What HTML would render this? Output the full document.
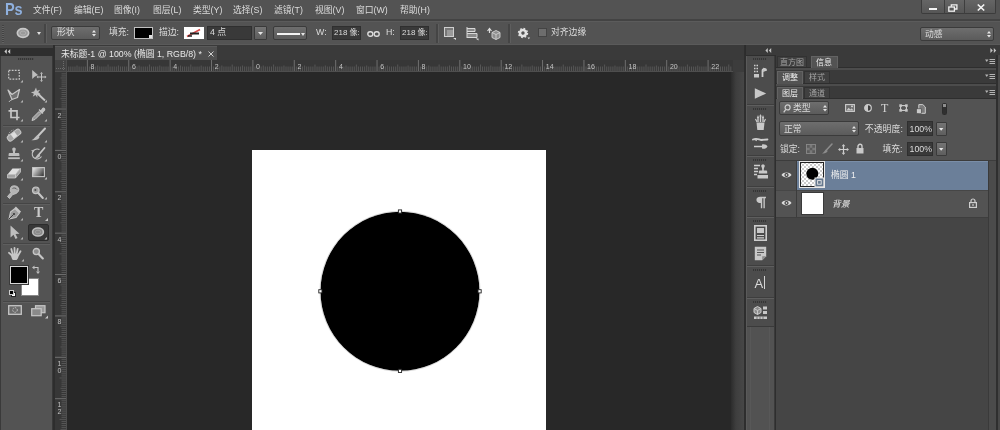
<!DOCTYPE html>
<html lang="zh-CN">
<head>
<meta charset="utf-8">
<title>Photoshop</title>
<style>
html,body{margin:0;padding:0;}
body{width:1000px;height:430px;overflow:hidden;background:#535353;position:relative;
 font-family:"Liberation Sans","Noto Sans CJK SC",sans-serif;font-size:9px;color:#dedede;line-height:1;}
#app{position:absolute;left:0;top:0;width:1000px;height:430px;will-change:transform;}
.a{position:absolute;box-sizing:border-box;}
.t{position:absolute;white-space:nowrap;}
svg{position:absolute;overflow:visible;}
.menu{font-size:8.8px;color:#dcdcdc;}
.lbl{font-size:8.8px;color:#dcdcdc;}
.dd{background:linear-gradient(#6e6e6e,#5b5b5b);border:1px solid #3b3b3b;border-radius:2px;}
.inp{background:#393939;border:1px solid #2f2f2f;}
.btn{background:linear-gradient(#747474,#5e5e5e);border:1px solid #3a3a3a;border-radius:1px;}
.vsep{width:2px;background:#454545;border-right:1px solid #5e5e5e;}
.hsep{height:2px;background:#454545;border-bottom:1px solid #5e5e5e;}
.rn{position:absolute;font-size:7px;color:#c2c2c2;line-height:1;}
.ptab{position:absolute;font-size:8px;white-space:nowrap;text-align:center;box-sizing:border-box;}
.on{background:#535353;color:#ececec;}
.off{color:#a2a2a2;}
</style>
</head>
<body>
<div id="app">
<!-- TOP BARS -->
<div class="a " style="left:0px;top:0px;width:1000px;height:19px;background:#535353;"></div>
<div class="a " style="left:0px;top:19px;width:1000px;height:2px;background:#434343;"></div>
<div class="a " style="left:0px;top:21px;width:1000px;height:1px;background:#5b5b5b;"></div>
<div class="t " style="left:4.5px;top:1px;font-size:16.5px;font-weight:bold;color:#8fb0de;letter-spacing:-0.3px;transform:scaleX(0.88);transform-origin:0 0;">Ps</div>
<div class="t menu" style="left:33px;top:6px;">文件(F)</div>
<div class="t menu" style="left:74px;top:6px;">编辑(E)</div>
<div class="t menu" style="left:114px;top:6px;">图像(I)</div>
<div class="t menu" style="left:153px;top:6px;">图层(L)</div>
<div class="t menu" style="left:193px;top:6px;">类型(Y)</div>
<div class="t menu" style="left:233px;top:6px;">选择(S)</div>
<div class="t menu" style="left:274px;top:6px;">滤镜(T)</div>
<div class="t menu" style="left:315px;top:6px;">视图(V)</div>
<div class="t menu" style="left:356px;top:6px;">窗口(W)</div>
<div class="t menu" style="left:400px;top:6px;">帮助(H)</div>
<div class="a " style="left:921px;top:0px;width:75px;height:14px;background:linear-gradient(#656565,#565656);border:1px solid #3c3c3c;border-top:none;border-radius:0 0 2px 2px;"></div>
<div class="a " style="left:943.5px;top:0px;width:1px;height:13.5px;background:#3e3e3e;"></div>
<div class="a " style="left:963.5px;top:0px;width:1px;height:13.5px;background:#3e3e3e;"></div>
<div class="a " style="left:929px;top:8px;width:8px;height:2px;background:#f2f2f2;"></div>
<svg style="left:948px;top:3.5px;" width="10" height="8" viewBox="0 0 10 8"><path d="M3.3 2.8V0.8h5.600v4.200H6.800" fill="none" stroke="#f0f0f0" stroke-width="1.300"/><rect x="0.800" y="3" width="5.600" height="4.200" fill="none" stroke="#f0f0f0" stroke-width="1.300"/></svg>
<svg style="left:976.5px;top:3.5px;" width="8" height="7" viewBox="0 0 8 7"><path d="M0.8 0.5L7.2 6.5M7.2 0.5L0.8 6.5" stroke="#f4f4f4" stroke-width="1.7"/></svg>
<div class="a " style="left:0px;top:22px;width:1000px;height:23px;background:#535353;"></div>
<div class="a " style="left:0px;top:44px;width:1000px;height:1px;background:#5a5a5a;"></div>
<div class="a " style="left:0px;top:45px;width:1000px;height:15px;background:#3a3a3a;"></div>
<div class="a " style="left:2px;top:25px;width:2px;height:18px;background:repeating-linear-gradient(#424242 0 1px,#626262 1px 2px);"></div>
<svg style="left:15.2px;top:25.75px;" width="16" height="14" viewBox="0 0 16 14"><ellipse cx="8" cy="7" rx="5.7" ry="4.35" fill="#9a9a9a" stroke="#c8c8c8" stroke-width="1.6"/><ellipse cx="8" cy="7" rx="2.8" ry="2" fill="none" stroke="#b2b2b2" stroke-width="0.8"/></svg>
<svg style="left:36.5px;top:31.5px;" width="4" height="3" viewBox="0 0 4 3"><path d="M0 0h4L2 3z" fill="#e0e0e0"/></svg>
<div class="a vsep" style="left:44px;top:24px;width:3px;height:19px;background:;"></div>
<div class="a dd" style="left:51px;top:25.5px;width:49px;height:14.5px;background:;"></div>
<div class="t lbl" style="left:57px;top:28px;">形状</div>
<svg style="left:92.3px;top:30px;" width="4" height="6.4" viewBox="0 0 4 6.4"><path d="M0 2.4L2 0L4 2.400zM0 4L2 6.400L4 4z" fill="#e6e6e6"/></svg>
<div class="t lbl" style="left:109px;top:28px;">填充:</div>
<div class="a " style="left:134px;top:27px;width:19px;height:12px;background:#000;border:1px solid #c0c0c0;"></div>
<div class="a " style="left:149px;top:35px;width:3px;height:3px;background:#e0e0e0;"></div>
<div class="t lbl" style="left:159px;top:28px;">描边:</div>
<div class="a " style="left:184px;top:27px;width:20px;height:12px;background:#fff;"></div>
<svg style="left:184px;top:27px;" width="20" height="12" viewBox="0 0 20 12"><path d="M3 9.5L16 2.5" stroke="#d94a4a" stroke-width="1.6"/><path d="M6 5.5h9v2H6z" fill="#222"/><path d="M4 9h4" stroke="#222" stroke-width="1.5"/></svg>
<div class="a inp" style="left:207px;top:25.5px;width:45px;height:14.5px;background:;"></div>
<div class="t lbl" style="left:210px;top:28px;">4 点</div>
<div class="a btn" style="left:254px;top:25.5px;width:13px;height:14.5px;background:;"></div>
<svg style="left:258px;top:32px;" width="5" height="3" viewBox="0 0 5 3"><path d="M0 0h5L2.5 3z" fill="#e6e6e6"/></svg>
<div class="a dd" style="left:272.5px;top:25.5px;width:34px;height:14.5px;background:;"></div>
<div class="a " style="left:277px;top:33px;width:23px;height:2px;background:#f2f2f2;"></div>
<svg style="left:301px;top:33px;" width="4" height="3" viewBox="0 0 4 3"><path d="M0 0h4L2 3z" fill="#e6e6e6"/></svg>
<div class="t lbl" style="left:316px;top:28px;">W:</div>
<div class="a inp" style="left:332px;top:25.5px;width:29px;height:14.5px;background:;"></div>
<div class="t lbl" style="left:334px;top:29px;font-size:8px;margin-top:-0.5px;">218 像:</div>
<svg style="left:367px;top:30.5px;" width="13" height="6" viewBox="0 0 13 6"><rect x="0.8" y="0.8" width="5" height="4.4" rx="2.2" fill="none" stroke="#dcdcdc" stroke-width="1.4"/><rect x="7.2" y="0.8" width="5" height="4.4" rx="2.2" fill="none" stroke="#dcdcdc" stroke-width="1.4"/></svg>
<div class="t lbl" style="left:386px;top:28px;">H:</div>
<div class="a inp" style="left:400px;top:25.5px;width:29px;height:14.5px;background:;"></div>
<div class="t lbl" style="left:402px;top:29px;font-size:8px;margin-top:-0.5px;">218 像:</div>
<div class="a vsep" style="left:436px;top:24px;width:3px;height:19px;background:;"></div>
<svg style="left:444px;top:27px;" width="13" height="14" viewBox="0 0 13 14"><rect x="0.5" y="0.5" width="9" height="9" fill="#777" stroke="#cfcfcf"/><rect x="3" y="3" width="6" height="6" fill="#9a9a9a"/><path d="M9 11h3v2z" fill="#ddd"/></svg>
<svg style="left:466px;top:27px;" width="13" height="14" viewBox="0 0 13 14"><path d="M1 0v11M1 1.5h8v3H1M1 6.5h10v4H1" fill="#8a8a8a" stroke="#d8d8d8" stroke-width="1"/><path d="M9.5 11.5h3v2z" fill="#ddd"/></svg>
<svg style="left:486px;top:27px;" width="15" height="14" viewBox="0 0 15 14"><path d="M3.5 2v4M1.5 4l2-2.5l2 2.5" fill="none" stroke="#ddd" stroke-width="1.2"/><path d="M6 5.5l4-2l4 2v5l-4 2l-4-2z" fill="#8d8d8d" stroke="#d4d4d4" stroke-width="0.9"/><path d="M6 5.5l4 2l4-2M10 7.5v5" fill="none" stroke="#d4d4d4" stroke-width="0.8"/></svg>
<div class="a vsep" style="left:508px;top:24px;width:3px;height:19px;background:;"></div>
<svg style="left:518px;top:28px;" width="12" height="12" viewBox="0 0 12 12"><circle cx="5" cy="5" r="3" fill="none" stroke="#e2e2e2" stroke-width="2.600"/><circle cx="5" cy="5" r="4.500" fill="none" stroke="#e2e2e2" stroke-width="1.400" stroke-dasharray="1.700 1.830"/><path d="M9.500 9.500h2.600l-1.300 1.800z" fill="#ddd"/></svg>
<div class="a " style="left:538px;top:28px;width:9px;height:9px;background:#6d6d6d;border:1px solid #444;"></div>
<div class="t lbl" style="left:551px;top:28px;">对齐边缘</div>
<div class="a dd" style="left:920px;top:26.5px;width:74px;height:14.5px;background:;"></div>
<div class="t lbl" style="left:925px;top:29.5px;">动感</div>
<svg style="left:987px;top:30.5px;" width="4" height="6.4" viewBox="0 0 4 6.4"><path d="M0 2.4L2 0L4 2.400zM0 4L2 6.400L4 4z" fill="#e6e6e6"/></svg>
<!-- TOOLBOX -->
<div class="a " style="left:0px;top:45px;width:53px;height:3px;background:#444;"></div>
<div class="a " style="left:0px;top:48px;width:53px;height:8px;background:#2e2e2e;"></div>
<svg style="left:3.5px;top:48.5px;" width="6.5" height="5" viewBox="0 0 6.5 5"><path d="M2.800 0L0.400 2.500L2.800 5zM6.200 0L3.800 2.500L6.200 5z" fill="#cccccc"/></svg>
<div class="a " style="left:0px;top:56px;width:53px;height:374px;background:#535353;border-left:1px solid #3a3a3a;border-right:1px solid #383838;"></div>
<div class="a " style="left:53px;top:45px;width:2px;height:385px;background:#2d2d2d;"></div>
<div class="a " style="left:18px;top:57.5px;width:15.5px;height:2px;background:repeating-linear-gradient(90deg,#363636 0 1px,#4c4c4c 1px 2px);"></div>
<div class="a hsep" style="left:3px;top:124.5px;width:47px;"></div>
<div class="a hsep" style="left:3px;top:202.5px;width:47px;"></div>
<div class="a hsep" style="left:3px;top:243px;width:47px;"></div>
<div class="a hsep" style="left:3px;top:300.5px;width:47px;"></div>
<svg style="left:6.0px;top:67.0px;" width="16" height="16" viewBox="0 0 16 16"><rect x="2.7" y="3.3" width="10.6" height="8.8" fill="none" stroke="#c6c6c6" stroke-width="1.2" stroke-dasharray="1.8 1.250"/><path d="M14.5 15.5h2.400v-2.400z" fill="#c0c0c0"/></svg>
<svg style="left:30.0px;top:67.0px;" width="16" height="16" viewBox="0 0 16 16"><path d="M2.2 3v9l2.4-2.200L8 8z" fill="#bebebe"/><path d="M11.5 6.500v7M8 10h7" stroke="#c6c6c6" stroke-width="1"/><path d="M11.5 5l1.5 1.700h-3zM11.5 15l1.5-1.700h-3zM6.5 10l1.7-1.500v3zM16.5 10l-1.7-1.500v3z" fill="#bebebe"/></svg>
<svg style="left:6.0px;top:86.5px;" width="16" height="16" viewBox="0 0 16 16"><path d="M2 3l4 4.5L13.5 2.5L11.5 10.5L6 12.5z" fill="#8a8a8a" fill-opacity="0.55" stroke="#c6c6c6" stroke-width="1.2" stroke-linejoin="round"/><path d="M6 12.5c-1 1-2.5 1.2-3 2.5" fill="none" stroke="#c6c6c6" stroke-width="1"/><path d="M14.5 15.5h2.400v-2.400z" fill="#c0c0c0"/></svg>
<svg style="left:30.0px;top:86.5px;" width="16" height="16" viewBox="0 0 16 16"><path d="M7.5 6.500L15 13.5" stroke="#c6c6c6" stroke-width="1.9"/><path d="M6 0.500l1 3.200l3.2-1l-2 2.600l2.6 2l-3.3.1l-.2 3.300l-1.8-2.700l-2.8 1.700l1.2-3l-3-1.400l3.2-.8z" fill="#bebebe"/><path d="M14.5 15.5h2.400v-2.400z" fill="#c0c0c0"/></svg>
<svg style="left:6.0px;top:105.5px;" width="16" height="16" viewBox="0 0 16 16"><path d="M5 2v9.500h8.500M2.5 4.800h8.500v9.5" fill="none" stroke="#c6c6c6" stroke-width="1.7"/><path d="M14.5 15.5h2.400v-2.400z" fill="#c0c0c0"/></svg>
<svg style="left:30.0px;top:105.5px;" width="16" height="16" viewBox="0 0 16 16"><path d="M2 14.5l1-3l6-6l2 2l-6 6z" fill="#9a9a9a" stroke="#c6c6c6" stroke-width="1"/><path d="M9 3.5l4 4M10.5 5.5l2.2-3c.8-1 2.6.4 1.8 1.6l-2.5 2.6z" fill="#bebebe" stroke="#c6c6c6" stroke-width="1.2"/><path d="M14.5 15.5h2.400v-2.400z" fill="#c0c0c0"/></svg>
<svg style="left:6.0px;top:126.5px;" width="16" height="16" viewBox="0 0 16 16"><rect x="0.5" y="5.2" width="15" height="5.8" rx="2.3" transform="rotate(-38 8 8)" fill="#a4a4a4" stroke="#c6c6c6" stroke-width="1"/><rect x="5.7" y="5.6" width="4.6" height="5" transform="rotate(-38 8 8)" fill="#dedede"/><path d="M2.5 8C3 5.5 5 3.5 7.5 3" fill="none" stroke="#c6c6c6" stroke-width="0.8" stroke-dasharray="1.2 1"/><path d="M14.5 15.5h2.400v-2.400z" fill="#c0c0c0"/></svg>
<svg style="left:30.0px;top:126.5px;" width="16" height="16" viewBox="0 0 16 16"><path d="M15 1.5L7.5 9.5" stroke="#c6c6c6" stroke-width="2" stroke-linecap="round"/><path d="M7.8 8.2l1.8 1.8c-1 2.5-4 3.8-8.2 3.2c2.8-.8 3.2-3.8 6.4-5z" fill="#bebebe"/><path d="M14.5 15.5h2.400v-2.400z" fill="#c0c0c0"/></svg>
<svg style="left:6.0px;top:145.5px;" width="16" height="16" viewBox="0 0 16 16"><path d="M6.4 4a1.8 1.8 0 1 1 3.2 0c-.4 1-.7 1.8-.6 3h3c.8 0 1.4.5 1.4 1.300v1.700h-10.800v-1.700c0-.8.6-1.3 1.4-1.300h3c.1-1.2-.2-2-.6-3z" fill="#bebebe"/><rect x="2.2" y="11.3" width="11.6" height="1.8" fill="#bebebe"/><path d="M14.5 15.5h2.400v-2.400z" fill="#c0c0c0"/></svg>
<svg style="left:30.0px;top:145.5px;" width="16" height="16" viewBox="0 0 16 16"><path d="M14.5 2L8.5 9" stroke="#c6c6c6" stroke-width="1.8" stroke-linecap="round"/><path d="M8.6 8l1.6 1.600c-.8 2-3 3-6 2.600c2-.7 2.2-3 4.4-4.200z" fill="#bebebe"/><path d="M9.5 3.500a5 5 0 1 0 2 7" fill="none" stroke="#c6c6c6" stroke-width="1.1"/><path d="M1 4.500l2.5 2l1.2-3z" fill="#bebebe"/><path d="M14.5 15.5h2.400v-2.400z" fill="#c0c0c0"/></svg>
<svg style="left:6.0px;top:164.5px;" width="16" height="16" viewBox="0 0 16 16"><path d="M6.5 3.500h8l-5 6h-8z" fill="#e0e0e0"/><path d="M1.5 9.500h8v3.500h-8zM9.5 9.500l5-6v3.500l-5 6z" fill="#a0a0a0" stroke="#c6c6c6" stroke-width="0.8"/><path d="M14.5 15.5h2.400v-2.400z" fill="#c0c0c0"/></svg>
<svg style="left:31.5px;top:167.0px;" width="16" height="14" viewBox="0 0 16 14"><defs><linearGradient id="gg" x1="0" y1="0" x2="1" y2="0.6"><stop offset="0" stop-color="#f4f4f4"/><stop offset="1" stop-color="#444"/></linearGradient></defs><rect x="0.6" y="0.6" width="11.8" height="9" fill="url(#gg)" stroke="#c6c6c6" stroke-width="1.1"/><path d="M12.5 12.500h2.400v-2.400z" fill="#c8c8c8"/></svg>
<svg style="left:6.0px;top:183.5px;" width="16" height="16" viewBox="0 0 16 16"><path d="M5.5 2.500c2.5-1.5 6-.5 7 1.500c1 2.5-.5 4.5-2.5 5.500l-3.5 1.200L3.5 14.500L1.5 12.500L5 8.500c-1-1.5-1-4.5.5-6z" fill="#b4b4b4" stroke="#c6c6c6" stroke-width="0.9"/><path d="M6.5 4.500c1.5-1 3.5-.5 4.5 1" fill="none" stroke="#555" stroke-width="0.9"/><path d="M14.5 15.5h2.400v-2.400z" fill="#c0c0c0"/></svg>
<svg style="left:30.0px;top:183.5px;" width="16" height="16" viewBox="0 0 16 16"><circle cx="5.8" cy="6.3" r="3.3" fill="#a0a0a0" stroke="#c6c6c6" stroke-width="1.2"/><circle cx="5.4" cy="5.9" r="1" fill="#4c4c4c"/><path d="M8.3 9l4.5 5" stroke="#c6c6c6" stroke-width="2" stroke-linecap="round"/><path d="M14.5 15.5h2.400v-2.400z" fill="#c0c0c0"/></svg>
<svg style="left:6.0px;top:204.5px;" width="16" height="16" viewBox="0 0 16 16"><path d="M3 14l1.5-7L9 3.500l4.5 4.500L10 12.500z" fill="#9c9c9c" stroke="#c6c6c6" stroke-width="1.1" stroke-linejoin="round"/><path d="M3 14l4.5-4.5" stroke="#3c3c3c" stroke-width="1"/><circle cx="8" cy="9" r="1.1" fill="#3c3c3c"/><path d="M9.2 2.200l5.2 5.2" stroke="#c6c6c6" stroke-width="2"/><path d="M14.5 15.5h2.400v-2.400z" fill="#c0c0c0"/></svg>
<div class="t" style="left:34px;top:205.5px;font-family:'Liberation Serif',serif;font-weight:bold;font-size:14px;color:#cacaca;">T</div>
<svg style="left:45px;top:217.5px;" width="3" height="3" viewBox="0 0 3 3"><path d="M0 3h3v-3z" fill="#c8c8c8"/></svg>
<svg style="left:6.0px;top:224.0px;" width="16" height="16" viewBox="0 0 16 16"><path d="M4.5 1.500v12l3-2.800l2 4.300l2-.9l-2-4.200l4-.2z" fill="#bebebe"/><path d="M14.5 15.5h2.400v-2.400z" fill="#c0c0c0"/></svg>
<div class="a" style="left:27.500px;top:223.5px;width:21px;height:17px;background:#383838;border:1px solid #2c2c2c;border-radius:2px;"></div>
<svg style="left:29.5px;top:224.3px;" width="16" height="16" viewBox="0 0 16 16"><ellipse cx="8" cy="8" rx="5.4" ry="4" fill="#8a8a8a" stroke="#c0c0c0" stroke-width="1.6"/><ellipse cx="8" cy="8" rx="2.6" ry="1.8" fill="none" stroke="#a8a8a8" stroke-width="0.7"/><path d="M14.5 15.5h2.400v-2.400z" fill="#c0c0c0"/></svg>
<svg style="left:6.800000000000001px;top:246.0px;" width="16" height="16" viewBox="0 0 16 16"><path d="M5 9.500L2 6.800M5.7 8L4.3 3M7.7 7.500L7.5 1.800M9.6 8L10.7 2.800M11.2 9.200L13.5 5.2" fill="none" stroke="#c6c6c6" stroke-width="1.8" stroke-linecap="round"/><path d="M4.2 8.500c2-1.5 5.5-1.5 7.6 0.300c-.2 2.4-.8 4-2.2 5.200h-3.800c-1.2-1.5-1.8-3.5-1.6-5.500z" fill="#c6c6c6"/><path d="M14.5 15.5h2.400v-2.400z" fill="#c0c0c0"/></svg>
<svg style="left:30.0px;top:246.0px;" width="16" height="16" viewBox="0 0 16 16"><circle cx="6.3" cy="5.6" r="3.1" fill="#8e8e8e" stroke="#c6c6c6" stroke-width="1.3"/><path d="M8.8 8.200l4 4.3" stroke="#c6c6c6" stroke-width="2.1" stroke-linecap="round"/></svg>
<div class="a" style="left:21px;top:278px;width:18px;height:18px;background:#fff;border:1px solid #888;"></div>
<div class="a" style="left:10px;top:266px;width:18px;height:18px;background:#000;border:1px solid #d8d8d8;outline:1px solid #3a3a3a;"></div>
<svg style="left:32px;top:265px;" width="9" height="9" viewBox="0 0 9 9"><path d="M2 2.500h4v4" fill="none" stroke="#c6c6c6" stroke-width="1.1"/><path d="M0 2.500l2.5-2v4zM6 9l-2-2.500h4z" fill="#bebebe"/></svg>
<div class="a" style="left:11px;top:292px;width:5px;height:5px;background:#fff;border:1px solid #222;"></div>
<div class="a" style="left:8.500px;top:289.500px;width:5px;height:5px;background:#000;border:1px solid #ccc;"></div>
<svg style="left:7.500px;top:305px;" width="14" height="10" viewBox="0 0 14 10"><rect x="0.7" y="0.7" width="12.6" height="8.6" fill="#6a6a6a" stroke="#c6c6c6" stroke-width="1.3"/><circle cx="7" cy="5" r="2.3" fill="none" stroke="#c6c6c6" stroke-width="1" stroke-dasharray="1.4 1"/></svg>
<svg style="left:30.500px;top:304.500px;" width="17" height="14" viewBox="0 0 17 14"><rect x="4.5" y="0.7" width="9.5" height="7" fill="#9a9a9a" stroke="#c6c6c6" stroke-width="1.2"/><rect x="0.7" y="3.7" width="9.5" height="7" fill="#8a8a8a" stroke="#c6c6c6" stroke-width="1.2"/><path d="M14 13.500h3v-3z" fill="#c8c8c8"/></svg>
<!-- DOCUMENT -->
<div class="a " style="left:55px;top:60px;width:690px;height:370px;background:#282828;"></div>
<div class="a " style="left:55px;top:46px;width:162px;height:14px;background:#4f4f4f;border-top:1px solid #5a5a5a;"></div>
<div class="t lbl" style="left:61px;top:50px;color:#e8e8e8;">未标题-1 @ 100% (椭圆 1, RGB/8) *</div>
<svg style="left:208px;top:51px;" width="6" height="6" viewBox="0 0 6 6"><path d="M0.5 0.5L5.5 5.5M5.5 0.5L0.5 5.5" stroke="#d0d0d0" stroke-width="1"/></svg>
<div class="a " style="left:55px;top:60px;width:678px;height:12px;background:#373737;border-bottom:1px solid #4e4e4e;"></div>
<div class="a " style="left:55px;top:60px;width:12px;height:370px;background:#373737;border-right:1px solid #4e4e4e;"></div>
<svg style="left:0;top:0;" width="1000" height="430" viewBox="0 0 1000 430"><path d="M68.76 71v-4.5" stroke="#5e5e5e" stroke-width="0.8"/><path d="M70.83 71v-4.5" stroke="#5e5e5e" stroke-width="0.8"/><path d="M72.90 71v-4.5" stroke="#5e5e5e" stroke-width="0.8"/><path d="M74.97 71v-4.5" stroke="#5e5e5e" stroke-width="0.8"/><path d="M77.03 71v-5.5" stroke="#5e5e5e" stroke-width="0.8"/><path d="M79.10 71v-4.5" stroke="#5e5e5e" stroke-width="0.8"/><path d="M81.17 71v-4.5" stroke="#5e5e5e" stroke-width="0.8"/><path d="M83.24 71v-4.5" stroke="#5e5e5e" stroke-width="0.8"/><path d="M85.31 71v-4.5" stroke="#5e5e5e" stroke-width="0.8"/><path d="M87.38 71v-11" stroke="#7e7e7e" stroke-width="0.8"/><path d="M89.45 71v-4.5" stroke="#5e5e5e" stroke-width="0.8"/><path d="M91.52 71v-4.5" stroke="#5e5e5e" stroke-width="0.8"/><path d="M93.59 71v-4.5" stroke="#5e5e5e" stroke-width="0.8"/><path d="M95.66 71v-4.5" stroke="#5e5e5e" stroke-width="0.8"/><path d="M97.72 71v-5.5" stroke="#5e5e5e" stroke-width="0.8"/><path d="M99.79 71v-4.5" stroke="#5e5e5e" stroke-width="0.8"/><path d="M101.86 71v-4.5" stroke="#5e5e5e" stroke-width="0.8"/><path d="M103.93 71v-4.5" stroke="#5e5e5e" stroke-width="0.8"/><path d="M106.00 71v-4.5" stroke="#5e5e5e" stroke-width="0.8"/><path d="M108.07 71v-6.5" stroke="#5e5e5e" stroke-width="0.8"/><path d="M110.14 71v-4.5" stroke="#5e5e5e" stroke-width="0.8"/><path d="M112.21 71v-4.5" stroke="#5e5e5e" stroke-width="0.8"/><path d="M114.28 71v-4.5" stroke="#5e5e5e" stroke-width="0.8"/><path d="M116.35 71v-4.5" stroke="#5e5e5e" stroke-width="0.8"/><path d="M118.41 71v-5.5" stroke="#5e5e5e" stroke-width="0.8"/><path d="M120.48 71v-4.5" stroke="#5e5e5e" stroke-width="0.8"/><path d="M122.55 71v-4.5" stroke="#5e5e5e" stroke-width="0.8"/><path d="M124.62 71v-4.5" stroke="#5e5e5e" stroke-width="0.8"/><path d="M126.69 71v-4.5" stroke="#5e5e5e" stroke-width="0.8"/><path d="M128.76 71v-11" stroke="#7e7e7e" stroke-width="0.8"/><path d="M130.83 71v-4.5" stroke="#5e5e5e" stroke-width="0.8"/><path d="M132.90 71v-4.5" stroke="#5e5e5e" stroke-width="0.8"/><path d="M134.97 71v-4.5" stroke="#5e5e5e" stroke-width="0.8"/><path d="M137.04 71v-4.5" stroke="#5e5e5e" stroke-width="0.8"/><path d="M139.10 71v-5.5" stroke="#5e5e5e" stroke-width="0.8"/><path d="M141.17 71v-4.5" stroke="#5e5e5e" stroke-width="0.8"/><path d="M143.24 71v-4.5" stroke="#5e5e5e" stroke-width="0.8"/><path d="M145.31 71v-4.5" stroke="#5e5e5e" stroke-width="0.8"/><path d="M147.38 71v-4.5" stroke="#5e5e5e" stroke-width="0.8"/><path d="M149.45 71v-6.5" stroke="#5e5e5e" stroke-width="0.8"/><path d="M151.52 71v-4.5" stroke="#5e5e5e" stroke-width="0.8"/><path d="M153.59 71v-4.5" stroke="#5e5e5e" stroke-width="0.8"/><path d="M155.66 71v-4.5" stroke="#5e5e5e" stroke-width="0.8"/><path d="M157.73 71v-4.5" stroke="#5e5e5e" stroke-width="0.8"/><path d="M159.79 71v-5.5" stroke="#5e5e5e" stroke-width="0.8"/><path d="M161.86 71v-4.5" stroke="#5e5e5e" stroke-width="0.8"/><path d="M163.93 71v-4.5" stroke="#5e5e5e" stroke-width="0.8"/><path d="M166.00 71v-4.5" stroke="#5e5e5e" stroke-width="0.8"/><path d="M168.07 71v-4.5" stroke="#5e5e5e" stroke-width="0.8"/><path d="M170.14 71v-11" stroke="#7e7e7e" stroke-width="0.8"/><path d="M172.21 71v-4.5" stroke="#5e5e5e" stroke-width="0.8"/><path d="M174.28 71v-4.5" stroke="#5e5e5e" stroke-width="0.8"/><path d="M176.35 71v-4.5" stroke="#5e5e5e" stroke-width="0.8"/><path d="M178.42 71v-4.5" stroke="#5e5e5e" stroke-width="0.8"/><path d="M180.48 71v-5.5" stroke="#5e5e5e" stroke-width="0.8"/><path d="M182.55 71v-4.5" stroke="#5e5e5e" stroke-width="0.8"/><path d="M184.62 71v-4.5" stroke="#5e5e5e" stroke-width="0.8"/><path d="M186.69 71v-4.5" stroke="#5e5e5e" stroke-width="0.8"/><path d="M188.76 71v-4.5" stroke="#5e5e5e" stroke-width="0.8"/><path d="M190.83 71v-6.5" stroke="#5e5e5e" stroke-width="0.8"/><path d="M192.90 71v-4.5" stroke="#5e5e5e" stroke-width="0.8"/><path d="M194.97 71v-4.5" stroke="#5e5e5e" stroke-width="0.8"/><path d="M197.04 71v-4.5" stroke="#5e5e5e" stroke-width="0.8"/><path d="M199.11 71v-4.5" stroke="#5e5e5e" stroke-width="0.8"/><path d="M201.17 71v-5.5" stroke="#5e5e5e" stroke-width="0.8"/><path d="M203.24 71v-4.5" stroke="#5e5e5e" stroke-width="0.8"/><path d="M205.31 71v-4.5" stroke="#5e5e5e" stroke-width="0.8"/><path d="M207.38 71v-4.5" stroke="#5e5e5e" stroke-width="0.8"/><path d="M209.45 71v-4.5" stroke="#5e5e5e" stroke-width="0.8"/><path d="M211.52 71v-11" stroke="#7e7e7e" stroke-width="0.8"/><path d="M213.59 71v-4.5" stroke="#5e5e5e" stroke-width="0.8"/><path d="M215.66 71v-4.5" stroke="#5e5e5e" stroke-width="0.8"/><path d="M217.73 71v-4.5" stroke="#5e5e5e" stroke-width="0.8"/><path d="M219.80 71v-4.5" stroke="#5e5e5e" stroke-width="0.8"/><path d="M221.87 71v-5.5" stroke="#5e5e5e" stroke-width="0.8"/><path d="M223.93 71v-4.5" stroke="#5e5e5e" stroke-width="0.8"/><path d="M226.00 71v-4.5" stroke="#5e5e5e" stroke-width="0.8"/><path d="M228.07 71v-4.5" stroke="#5e5e5e" stroke-width="0.8"/><path d="M230.14 71v-4.5" stroke="#5e5e5e" stroke-width="0.8"/><path d="M232.21 71v-6.5" stroke="#5e5e5e" stroke-width="0.8"/><path d="M234.28 71v-4.5" stroke="#5e5e5e" stroke-width="0.8"/><path d="M236.35 71v-4.5" stroke="#5e5e5e" stroke-width="0.8"/><path d="M238.42 71v-4.5" stroke="#5e5e5e" stroke-width="0.8"/><path d="M240.49 71v-4.5" stroke="#5e5e5e" stroke-width="0.8"/><path d="M242.56 71v-5.5" stroke="#5e5e5e" stroke-width="0.8"/><path d="M244.62 71v-4.5" stroke="#5e5e5e" stroke-width="0.8"/><path d="M246.69 71v-4.5" stroke="#5e5e5e" stroke-width="0.8"/><path d="M248.76 71v-4.5" stroke="#5e5e5e" stroke-width="0.8"/><path d="M250.83 71v-4.5" stroke="#5e5e5e" stroke-width="0.8"/><path d="M252.90 71v-11" stroke="#7e7e7e" stroke-width="0.8"/><path d="M254.97 71v-4.5" stroke="#5e5e5e" stroke-width="0.8"/><path d="M257.04 71v-4.5" stroke="#5e5e5e" stroke-width="0.8"/><path d="M259.11 71v-4.5" stroke="#5e5e5e" stroke-width="0.8"/><path d="M261.18 71v-4.5" stroke="#5e5e5e" stroke-width="0.8"/><path d="M263.25 71v-5.5" stroke="#5e5e5e" stroke-width="0.8"/><path d="M265.31 71v-4.5" stroke="#5e5e5e" stroke-width="0.8"/><path d="M267.38 71v-4.5" stroke="#5e5e5e" stroke-width="0.8"/><path d="M269.45 71v-4.5" stroke="#5e5e5e" stroke-width="0.8"/><path d="M271.52 71v-4.5" stroke="#5e5e5e" stroke-width="0.8"/><path d="M273.59 71v-6.5" stroke="#5e5e5e" stroke-width="0.8"/><path d="M275.66 71v-4.5" stroke="#5e5e5e" stroke-width="0.8"/><path d="M277.73 71v-4.5" stroke="#5e5e5e" stroke-width="0.8"/><path d="M279.80 71v-4.5" stroke="#5e5e5e" stroke-width="0.8"/><path d="M281.87 71v-4.5" stroke="#5e5e5e" stroke-width="0.8"/><path d="M283.94 71v-5.5" stroke="#5e5e5e" stroke-width="0.8"/><path d="M286.00 71v-4.5" stroke="#5e5e5e" stroke-width="0.8"/><path d="M288.07 71v-4.5" stroke="#5e5e5e" stroke-width="0.8"/><path d="M290.14 71v-4.5" stroke="#5e5e5e" stroke-width="0.8"/><path d="M292.21 71v-4.5" stroke="#5e5e5e" stroke-width="0.8"/><path d="M294.28 71v-11" stroke="#7e7e7e" stroke-width="0.8"/><path d="M296.35 71v-4.5" stroke="#5e5e5e" stroke-width="0.8"/><path d="M298.42 71v-4.5" stroke="#5e5e5e" stroke-width="0.8"/><path d="M300.49 71v-4.5" stroke="#5e5e5e" stroke-width="0.8"/><path d="M302.56 71v-4.5" stroke="#5e5e5e" stroke-width="0.8"/><path d="M304.63 71v-5.5" stroke="#5e5e5e" stroke-width="0.8"/><path d="M306.69 71v-4.5" stroke="#5e5e5e" stroke-width="0.8"/><path d="M308.76 71v-4.5" stroke="#5e5e5e" stroke-width="0.8"/><path d="M310.83 71v-4.5" stroke="#5e5e5e" stroke-width="0.8"/><path d="M312.90 71v-4.5" stroke="#5e5e5e" stroke-width="0.8"/><path d="M314.97 71v-6.5" stroke="#5e5e5e" stroke-width="0.8"/><path d="M317.04 71v-4.5" stroke="#5e5e5e" stroke-width="0.8"/><path d="M319.11 71v-4.5" stroke="#5e5e5e" stroke-width="0.8"/><path d="M321.18 71v-4.5" stroke="#5e5e5e" stroke-width="0.8"/><path d="M323.25 71v-4.5" stroke="#5e5e5e" stroke-width="0.8"/><path d="M325.32 71v-5.5" stroke="#5e5e5e" stroke-width="0.8"/><path d="M327.38 71v-4.5" stroke="#5e5e5e" stroke-width="0.8"/><path d="M329.45 71v-4.5" stroke="#5e5e5e" stroke-width="0.8"/><path d="M331.52 71v-4.5" stroke="#5e5e5e" stroke-width="0.8"/><path d="M333.59 71v-4.5" stroke="#5e5e5e" stroke-width="0.8"/><path d="M335.66 71v-11" stroke="#7e7e7e" stroke-width="0.8"/><path d="M337.73 71v-4.5" stroke="#5e5e5e" stroke-width="0.8"/><path d="M339.80 71v-4.5" stroke="#5e5e5e" stroke-width="0.8"/><path d="M341.87 71v-4.5" stroke="#5e5e5e" stroke-width="0.8"/><path d="M343.94 71v-4.5" stroke="#5e5e5e" stroke-width="0.8"/><path d="M346.01 71v-5.5" stroke="#5e5e5e" stroke-width="0.8"/><path d="M348.07 71v-4.5" stroke="#5e5e5e" stroke-width="0.8"/><path d="M350.14 71v-4.5" stroke="#5e5e5e" stroke-width="0.8"/><path d="M352.21 71v-4.5" stroke="#5e5e5e" stroke-width="0.8"/><path d="M354.28 71v-4.5" stroke="#5e5e5e" stroke-width="0.8"/><path d="M356.35 71v-6.5" stroke="#5e5e5e" stroke-width="0.8"/><path d="M358.42 71v-4.5" stroke="#5e5e5e" stroke-width="0.8"/><path d="M360.49 71v-4.5" stroke="#5e5e5e" stroke-width="0.8"/><path d="M362.56 71v-4.5" stroke="#5e5e5e" stroke-width="0.8"/><path d="M364.63 71v-4.5" stroke="#5e5e5e" stroke-width="0.8"/><path d="M366.70 71v-5.5" stroke="#5e5e5e" stroke-width="0.8"/><path d="M368.76 71v-4.5" stroke="#5e5e5e" stroke-width="0.8"/><path d="M370.83 71v-4.5" stroke="#5e5e5e" stroke-width="0.8"/><path d="M372.90 71v-4.5" stroke="#5e5e5e" stroke-width="0.8"/><path d="M374.97 71v-4.5" stroke="#5e5e5e" stroke-width="0.8"/><path d="M377.04 71v-11" stroke="#7e7e7e" stroke-width="0.8"/><path d="M379.11 71v-4.5" stroke="#5e5e5e" stroke-width="0.8"/><path d="M381.18 71v-4.5" stroke="#5e5e5e" stroke-width="0.8"/><path d="M383.25 71v-4.5" stroke="#5e5e5e" stroke-width="0.8"/><path d="M385.32 71v-4.5" stroke="#5e5e5e" stroke-width="0.8"/><path d="M387.39 71v-5.5" stroke="#5e5e5e" stroke-width="0.8"/><path d="M389.45 71v-4.5" stroke="#5e5e5e" stroke-width="0.8"/><path d="M391.52 71v-4.5" stroke="#5e5e5e" stroke-width="0.8"/><path d="M393.59 71v-4.5" stroke="#5e5e5e" stroke-width="0.8"/><path d="M395.66 71v-4.5" stroke="#5e5e5e" stroke-width="0.8"/><path d="M397.73 71v-6.5" stroke="#5e5e5e" stroke-width="0.8"/><path d="M399.80 71v-4.5" stroke="#5e5e5e" stroke-width="0.8"/><path d="M401.87 71v-4.5" stroke="#5e5e5e" stroke-width="0.8"/><path d="M403.94 71v-4.5" stroke="#5e5e5e" stroke-width="0.8"/><path d="M406.01 71v-4.5" stroke="#5e5e5e" stroke-width="0.8"/><path d="M408.08 71v-5.5" stroke="#5e5e5e" stroke-width="0.8"/><path d="M410.14 71v-4.5" stroke="#5e5e5e" stroke-width="0.8"/><path d="M412.21 71v-4.5" stroke="#5e5e5e" stroke-width="0.8"/><path d="M414.28 71v-4.5" stroke="#5e5e5e" stroke-width="0.8"/><path d="M416.35 71v-4.5" stroke="#5e5e5e" stroke-width="0.8"/><path d="M418.42 71v-11" stroke="#7e7e7e" stroke-width="0.8"/><path d="M420.49 71v-4.5" stroke="#5e5e5e" stroke-width="0.8"/><path d="M422.56 71v-4.5" stroke="#5e5e5e" stroke-width="0.8"/><path d="M424.63 71v-4.5" stroke="#5e5e5e" stroke-width="0.8"/><path d="M426.70 71v-4.5" stroke="#5e5e5e" stroke-width="0.8"/><path d="M428.77 71v-5.5" stroke="#5e5e5e" stroke-width="0.8"/><path d="M430.83 71v-4.5" stroke="#5e5e5e" stroke-width="0.8"/><path d="M432.90 71v-4.5" stroke="#5e5e5e" stroke-width="0.8"/><path d="M434.97 71v-4.5" stroke="#5e5e5e" stroke-width="0.8"/><path d="M437.04 71v-4.5" stroke="#5e5e5e" stroke-width="0.8"/><path d="M439.11 71v-6.5" stroke="#5e5e5e" stroke-width="0.8"/><path d="M441.18 71v-4.5" stroke="#5e5e5e" stroke-width="0.8"/><path d="M443.25 71v-4.5" stroke="#5e5e5e" stroke-width="0.8"/><path d="M445.32 71v-4.5" stroke="#5e5e5e" stroke-width="0.8"/><path d="M447.39 71v-4.5" stroke="#5e5e5e" stroke-width="0.8"/><path d="M449.46 71v-5.5" stroke="#5e5e5e" stroke-width="0.8"/><path d="M451.52 71v-4.5" stroke="#5e5e5e" stroke-width="0.8"/><path d="M453.59 71v-4.5" stroke="#5e5e5e" stroke-width="0.8"/><path d="M455.66 71v-4.5" stroke="#5e5e5e" stroke-width="0.8"/><path d="M457.73 71v-4.5" stroke="#5e5e5e" stroke-width="0.8"/><path d="M459.80 71v-11" stroke="#7e7e7e" stroke-width="0.8"/><path d="M461.87 71v-4.5" stroke="#5e5e5e" stroke-width="0.8"/><path d="M463.94 71v-4.5" stroke="#5e5e5e" stroke-width="0.8"/><path d="M466.01 71v-4.5" stroke="#5e5e5e" stroke-width="0.8"/><path d="M468.08 71v-4.5" stroke="#5e5e5e" stroke-width="0.8"/><path d="M470.15 71v-5.5" stroke="#5e5e5e" stroke-width="0.8"/><path d="M472.21 71v-4.5" stroke="#5e5e5e" stroke-width="0.8"/><path d="M474.28 71v-4.5" stroke="#5e5e5e" stroke-width="0.8"/><path d="M476.35 71v-4.5" stroke="#5e5e5e" stroke-width="0.8"/><path d="M478.42 71v-4.5" stroke="#5e5e5e" stroke-width="0.8"/><path d="M480.49 71v-6.5" stroke="#5e5e5e" stroke-width="0.8"/><path d="M482.56 71v-4.5" stroke="#5e5e5e" stroke-width="0.8"/><path d="M484.63 71v-4.5" stroke="#5e5e5e" stroke-width="0.8"/><path d="M486.70 71v-4.5" stroke="#5e5e5e" stroke-width="0.8"/><path d="M488.77 71v-4.5" stroke="#5e5e5e" stroke-width="0.8"/><path d="M490.84 71v-5.5" stroke="#5e5e5e" stroke-width="0.8"/><path d="M492.90 71v-4.5" stroke="#5e5e5e" stroke-width="0.8"/><path d="M494.97 71v-4.5" stroke="#5e5e5e" stroke-width="0.8"/><path d="M497.04 71v-4.5" stroke="#5e5e5e" stroke-width="0.8"/><path d="M499.11 71v-4.5" stroke="#5e5e5e" stroke-width="0.8"/><path d="M501.18 71v-11" stroke="#7e7e7e" stroke-width="0.8"/><path d="M503.25 71v-4.5" stroke="#5e5e5e" stroke-width="0.8"/><path d="M505.32 71v-4.5" stroke="#5e5e5e" stroke-width="0.8"/><path d="M507.39 71v-4.5" stroke="#5e5e5e" stroke-width="0.8"/><path d="M509.46 71v-4.5" stroke="#5e5e5e" stroke-width="0.8"/><path d="M511.53 71v-5.5" stroke="#5e5e5e" stroke-width="0.8"/><path d="M513.59 71v-4.5" stroke="#5e5e5e" stroke-width="0.8"/><path d="M515.66 71v-4.5" stroke="#5e5e5e" stroke-width="0.8"/><path d="M517.73 71v-4.5" stroke="#5e5e5e" stroke-width="0.8"/><path d="M519.80 71v-4.5" stroke="#5e5e5e" stroke-width="0.8"/><path d="M521.87 71v-6.5" stroke="#5e5e5e" stroke-width="0.8"/><path d="M523.94 71v-4.5" stroke="#5e5e5e" stroke-width="0.8"/><path d="M526.01 71v-4.5" stroke="#5e5e5e" stroke-width="0.8"/><path d="M528.08 71v-4.5" stroke="#5e5e5e" stroke-width="0.8"/><path d="M530.15 71v-4.5" stroke="#5e5e5e" stroke-width="0.8"/><path d="M532.22 71v-5.5" stroke="#5e5e5e" stroke-width="0.8"/><path d="M534.28 71v-4.5" stroke="#5e5e5e" stroke-width="0.8"/><path d="M536.35 71v-4.5" stroke="#5e5e5e" stroke-width="0.8"/><path d="M538.42 71v-4.5" stroke="#5e5e5e" stroke-width="0.8"/><path d="M540.49 71v-4.5" stroke="#5e5e5e" stroke-width="0.8"/><path d="M542.56 71v-11" stroke="#7e7e7e" stroke-width="0.8"/><path d="M544.63 71v-4.5" stroke="#5e5e5e" stroke-width="0.8"/><path d="M546.70 71v-4.5" stroke="#5e5e5e" stroke-width="0.8"/><path d="M548.77 71v-4.5" stroke="#5e5e5e" stroke-width="0.8"/><path d="M550.84 71v-4.5" stroke="#5e5e5e" stroke-width="0.8"/><path d="M552.91 71v-5.5" stroke="#5e5e5e" stroke-width="0.8"/><path d="M554.97 71v-4.5" stroke="#5e5e5e" stroke-width="0.8"/><path d="M557.04 71v-4.5" stroke="#5e5e5e" stroke-width="0.8"/><path d="M559.11 71v-4.5" stroke="#5e5e5e" stroke-width="0.8"/><path d="M561.18 71v-4.5" stroke="#5e5e5e" stroke-width="0.8"/><path d="M563.25 71v-6.5" stroke="#5e5e5e" stroke-width="0.8"/><path d="M565.32 71v-4.5" stroke="#5e5e5e" stroke-width="0.8"/><path d="M567.39 71v-4.5" stroke="#5e5e5e" stroke-width="0.8"/><path d="M569.46 71v-4.5" stroke="#5e5e5e" stroke-width="0.8"/><path d="M571.53 71v-4.5" stroke="#5e5e5e" stroke-width="0.8"/><path d="M573.60 71v-5.5" stroke="#5e5e5e" stroke-width="0.8"/><path d="M575.66 71v-4.5" stroke="#5e5e5e" stroke-width="0.8"/><path d="M577.73 71v-4.5" stroke="#5e5e5e" stroke-width="0.8"/><path d="M579.80 71v-4.5" stroke="#5e5e5e" stroke-width="0.8"/><path d="M581.87 71v-4.5" stroke="#5e5e5e" stroke-width="0.8"/><path d="M583.94 71v-11" stroke="#7e7e7e" stroke-width="0.8"/><path d="M586.01 71v-4.5" stroke="#5e5e5e" stroke-width="0.8"/><path d="M588.08 71v-4.5" stroke="#5e5e5e" stroke-width="0.8"/><path d="M590.15 71v-4.5" stroke="#5e5e5e" stroke-width="0.8"/><path d="M592.22 71v-4.5" stroke="#5e5e5e" stroke-width="0.8"/><path d="M594.29 71v-5.5" stroke="#5e5e5e" stroke-width="0.8"/><path d="M596.35 71v-4.5" stroke="#5e5e5e" stroke-width="0.8"/><path d="M598.42 71v-4.5" stroke="#5e5e5e" stroke-width="0.8"/><path d="M600.49 71v-4.5" stroke="#5e5e5e" stroke-width="0.8"/><path d="M602.56 71v-4.5" stroke="#5e5e5e" stroke-width="0.8"/><path d="M604.63 71v-6.5" stroke="#5e5e5e" stroke-width="0.8"/><path d="M606.70 71v-4.5" stroke="#5e5e5e" stroke-width="0.8"/><path d="M608.77 71v-4.5" stroke="#5e5e5e" stroke-width="0.8"/><path d="M610.84 71v-4.5" stroke="#5e5e5e" stroke-width="0.8"/><path d="M612.91 71v-4.5" stroke="#5e5e5e" stroke-width="0.8"/><path d="M614.98 71v-5.5" stroke="#5e5e5e" stroke-width="0.8"/><path d="M617.04 71v-4.5" stroke="#5e5e5e" stroke-width="0.8"/><path d="M619.11 71v-4.5" stroke="#5e5e5e" stroke-width="0.8"/><path d="M621.18 71v-4.5" stroke="#5e5e5e" stroke-width="0.8"/><path d="M623.25 71v-4.5" stroke="#5e5e5e" stroke-width="0.8"/><path d="M625.32 71v-11" stroke="#7e7e7e" stroke-width="0.8"/><path d="M627.39 71v-4.5" stroke="#5e5e5e" stroke-width="0.8"/><path d="M629.46 71v-4.5" stroke="#5e5e5e" stroke-width="0.8"/><path d="M631.53 71v-4.5" stroke="#5e5e5e" stroke-width="0.8"/><path d="M633.60 71v-4.5" stroke="#5e5e5e" stroke-width="0.8"/><path d="M635.67 71v-5.5" stroke="#5e5e5e" stroke-width="0.8"/><path d="M637.73 71v-4.5" stroke="#5e5e5e" stroke-width="0.8"/><path d="M639.80 71v-4.5" stroke="#5e5e5e" stroke-width="0.8"/><path d="M641.87 71v-4.5" stroke="#5e5e5e" stroke-width="0.8"/><path d="M643.94 71v-4.5" stroke="#5e5e5e" stroke-width="0.8"/><path d="M646.01 71v-6.5" stroke="#5e5e5e" stroke-width="0.8"/><path d="M648.08 71v-4.5" stroke="#5e5e5e" stroke-width="0.8"/><path d="M650.15 71v-4.5" stroke="#5e5e5e" stroke-width="0.8"/><path d="M652.22 71v-4.5" stroke="#5e5e5e" stroke-width="0.8"/><path d="M654.29 71v-4.5" stroke="#5e5e5e" stroke-width="0.8"/><path d="M656.36 71v-5.5" stroke="#5e5e5e" stroke-width="0.8"/><path d="M658.42 71v-4.5" stroke="#5e5e5e" stroke-width="0.8"/><path d="M660.49 71v-4.5" stroke="#5e5e5e" stroke-width="0.8"/><path d="M662.56 71v-4.5" stroke="#5e5e5e" stroke-width="0.8"/><path d="M664.63 71v-4.5" stroke="#5e5e5e" stroke-width="0.8"/><path d="M666.70 71v-11" stroke="#7e7e7e" stroke-width="0.8"/><path d="M668.77 71v-4.5" stroke="#5e5e5e" stroke-width="0.8"/><path d="M670.84 71v-4.5" stroke="#5e5e5e" stroke-width="0.8"/><path d="M672.91 71v-4.5" stroke="#5e5e5e" stroke-width="0.8"/><path d="M674.98 71v-4.5" stroke="#5e5e5e" stroke-width="0.8"/><path d="M677.05 71v-5.5" stroke="#5e5e5e" stroke-width="0.8"/><path d="M679.11 71v-4.5" stroke="#5e5e5e" stroke-width="0.8"/><path d="M681.18 71v-4.5" stroke="#5e5e5e" stroke-width="0.8"/><path d="M683.25 71v-4.5" stroke="#5e5e5e" stroke-width="0.8"/><path d="M685.32 71v-4.5" stroke="#5e5e5e" stroke-width="0.8"/><path d="M687.39 71v-6.5" stroke="#5e5e5e" stroke-width="0.8"/><path d="M689.46 71v-4.5" stroke="#5e5e5e" stroke-width="0.8"/><path d="M691.53 71v-4.5" stroke="#5e5e5e" stroke-width="0.8"/><path d="M693.60 71v-4.5" stroke="#5e5e5e" stroke-width="0.8"/><path d="M695.67 71v-4.5" stroke="#5e5e5e" stroke-width="0.8"/><path d="M697.74 71v-5.5" stroke="#5e5e5e" stroke-width="0.8"/><path d="M699.80 71v-4.5" stroke="#5e5e5e" stroke-width="0.8"/><path d="M701.87 71v-4.5" stroke="#5e5e5e" stroke-width="0.8"/><path d="M703.94 71v-4.5" stroke="#5e5e5e" stroke-width="0.8"/><path d="M706.01 71v-4.5" stroke="#5e5e5e" stroke-width="0.8"/><path d="M708.08 71v-11" stroke="#7e7e7e" stroke-width="0.8"/><path d="M710.15 71v-4.5" stroke="#5e5e5e" stroke-width="0.8"/><path d="M712.22 71v-4.5" stroke="#5e5e5e" stroke-width="0.8"/><path d="M714.29 71v-4.5" stroke="#5e5e5e" stroke-width="0.8"/><path d="M716.36 71v-4.5" stroke="#5e5e5e" stroke-width="0.8"/><path d="M718.43 71v-5.5" stroke="#5e5e5e" stroke-width="0.8"/><path d="M720.49 71v-4.5" stroke="#5e5e5e" stroke-width="0.8"/><path d="M722.56 71v-4.5" stroke="#5e5e5e" stroke-width="0.8"/><path d="M724.63 71v-4.5" stroke="#5e5e5e" stroke-width="0.8"/><path d="M726.70 71v-4.5" stroke="#5e5e5e" stroke-width="0.8"/><path d="M728.77 71v-6.5" stroke="#5e5e5e" stroke-width="0.8"/><path d="M730.84 71v-4.5" stroke="#5e5e5e" stroke-width="0.8"/></svg>
<div class="rn" style="left:90.6px;top:62.5px;">8</div>
<div class="rn" style="left:132.0px;top:62.5px;">6</div>
<div class="rn" style="left:173.3px;top:62.5px;">4</div>
<div class="rn" style="left:214.7px;top:62.5px;">2</div>
<div class="rn" style="left:256.1px;top:62.5px;">0</div>
<div class="rn" style="left:297.5px;top:62.5px;">2</div>
<div class="rn" style="left:338.9px;top:62.5px;">4</div>
<div class="rn" style="left:380.2px;top:62.5px;">6</div>
<div class="rn" style="left:421.6px;top:62.5px;">8</div>
<div class="rn" style="left:463.0px;top:62.5px;">10</div>
<div class="rn" style="left:504.4px;top:62.5px;">12</div>
<div class="rn" style="left:545.8px;top:62.5px;">14</div>
<div class="rn" style="left:587.1px;top:62.5px;">16</div>
<div class="rn" style="left:628.5px;top:62.5px;">18</div>
<div class="rn" style="left:669.9px;top:62.5px;">20</div>
<div class="rn" style="left:711.3px;top:62.5px;">22</div>
<svg style="left:0;top:0;" width="1000" height="430" viewBox="0 0 1000 430"><path d="M66 73.85h-4.5" stroke="#5e5e5e" stroke-width="0.8"/><path d="M66 75.92h-4.5" stroke="#5e5e5e" stroke-width="0.8"/><path d="M66 77.98h-5.5" stroke="#5e5e5e" stroke-width="0.8"/><path d="M66 80.05h-4.5" stroke="#5e5e5e" stroke-width="0.8"/><path d="M66 82.12h-4.5" stroke="#5e5e5e" stroke-width="0.8"/><path d="M66 84.19h-4.5" stroke="#5e5e5e" stroke-width="0.8"/><path d="M66 86.26h-4.5" stroke="#5e5e5e" stroke-width="0.8"/><path d="M66 88.33h-6.5" stroke="#5e5e5e" stroke-width="0.8"/><path d="M66 90.40h-4.5" stroke="#5e5e5e" stroke-width="0.8"/><path d="M66 92.47h-4.5" stroke="#5e5e5e" stroke-width="0.8"/><path d="M66 94.54h-4.5" stroke="#5e5e5e" stroke-width="0.8"/><path d="M66 96.61h-4.5" stroke="#5e5e5e" stroke-width="0.8"/><path d="M66 98.68h-5.5" stroke="#5e5e5e" stroke-width="0.8"/><path d="M66 100.74h-4.5" stroke="#5e5e5e" stroke-width="0.8"/><path d="M66 102.81h-4.5" stroke="#5e5e5e" stroke-width="0.8"/><path d="M66 104.88h-4.5" stroke="#5e5e5e" stroke-width="0.8"/><path d="M66 106.95h-4.5" stroke="#5e5e5e" stroke-width="0.8"/><path d="M66 109.02h-11" stroke="#7e7e7e" stroke-width="0.8"/><path d="M66 111.09h-4.5" stroke="#5e5e5e" stroke-width="0.8"/><path d="M66 113.16h-4.5" stroke="#5e5e5e" stroke-width="0.8"/><path d="M66 115.23h-4.5" stroke="#5e5e5e" stroke-width="0.8"/><path d="M66 117.30h-4.5" stroke="#5e5e5e" stroke-width="0.8"/><path d="M66 119.37h-5.5" stroke="#5e5e5e" stroke-width="0.8"/><path d="M66 121.43h-4.5" stroke="#5e5e5e" stroke-width="0.8"/><path d="M66 123.50h-4.5" stroke="#5e5e5e" stroke-width="0.8"/><path d="M66 125.57h-4.5" stroke="#5e5e5e" stroke-width="0.8"/><path d="M66 127.64h-4.5" stroke="#5e5e5e" stroke-width="0.8"/><path d="M66 129.71h-6.5" stroke="#5e5e5e" stroke-width="0.8"/><path d="M66 131.78h-4.5" stroke="#5e5e5e" stroke-width="0.8"/><path d="M66 133.85h-4.5" stroke="#5e5e5e" stroke-width="0.8"/><path d="M66 135.92h-4.5" stroke="#5e5e5e" stroke-width="0.8"/><path d="M66 137.99h-4.5" stroke="#5e5e5e" stroke-width="0.8"/><path d="M66 140.06h-5.5" stroke="#5e5e5e" stroke-width="0.8"/><path d="M66 142.12h-4.5" stroke="#5e5e5e" stroke-width="0.8"/><path d="M66 144.19h-4.5" stroke="#5e5e5e" stroke-width="0.8"/><path d="M66 146.26h-4.5" stroke="#5e5e5e" stroke-width="0.8"/><path d="M66 148.33h-4.5" stroke="#5e5e5e" stroke-width="0.8"/><path d="M66 150.40h-11" stroke="#7e7e7e" stroke-width="0.8"/><path d="M66 152.47h-4.5" stroke="#5e5e5e" stroke-width="0.8"/><path d="M66 154.54h-4.5" stroke="#5e5e5e" stroke-width="0.8"/><path d="M66 156.61h-4.5" stroke="#5e5e5e" stroke-width="0.8"/><path d="M66 158.68h-4.5" stroke="#5e5e5e" stroke-width="0.8"/><path d="M66 160.75h-5.5" stroke="#5e5e5e" stroke-width="0.8"/><path d="M66 162.81h-4.5" stroke="#5e5e5e" stroke-width="0.8"/><path d="M66 164.88h-4.5" stroke="#5e5e5e" stroke-width="0.8"/><path d="M66 166.95h-4.5" stroke="#5e5e5e" stroke-width="0.8"/><path d="M66 169.02h-4.5" stroke="#5e5e5e" stroke-width="0.8"/><path d="M66 171.09h-6.5" stroke="#5e5e5e" stroke-width="0.8"/><path d="M66 173.16h-4.5" stroke="#5e5e5e" stroke-width="0.8"/><path d="M66 175.23h-4.5" stroke="#5e5e5e" stroke-width="0.8"/><path d="M66 177.30h-4.5" stroke="#5e5e5e" stroke-width="0.8"/><path d="M66 179.37h-4.5" stroke="#5e5e5e" stroke-width="0.8"/><path d="M66 181.44h-5.5" stroke="#5e5e5e" stroke-width="0.8"/><path d="M66 183.50h-4.5" stroke="#5e5e5e" stroke-width="0.8"/><path d="M66 185.57h-4.5" stroke="#5e5e5e" stroke-width="0.8"/><path d="M66 187.64h-4.5" stroke="#5e5e5e" stroke-width="0.8"/><path d="M66 189.71h-4.5" stroke="#5e5e5e" stroke-width="0.8"/><path d="M66 191.78h-11" stroke="#7e7e7e" stroke-width="0.8"/><path d="M66 193.85h-4.5" stroke="#5e5e5e" stroke-width="0.8"/><path d="M66 195.92h-4.5" stroke="#5e5e5e" stroke-width="0.8"/><path d="M66 197.99h-4.5" stroke="#5e5e5e" stroke-width="0.8"/><path d="M66 200.06h-4.5" stroke="#5e5e5e" stroke-width="0.8"/><path d="M66 202.12h-5.5" stroke="#5e5e5e" stroke-width="0.8"/><path d="M66 204.19h-4.5" stroke="#5e5e5e" stroke-width="0.8"/><path d="M66 206.26h-4.5" stroke="#5e5e5e" stroke-width="0.8"/><path d="M66 208.33h-4.5" stroke="#5e5e5e" stroke-width="0.8"/><path d="M66 210.40h-4.5" stroke="#5e5e5e" stroke-width="0.8"/><path d="M66 212.47h-6.5" stroke="#5e5e5e" stroke-width="0.8"/><path d="M66 214.54h-4.5" stroke="#5e5e5e" stroke-width="0.8"/><path d="M66 216.61h-4.5" stroke="#5e5e5e" stroke-width="0.8"/><path d="M66 218.68h-4.5" stroke="#5e5e5e" stroke-width="0.8"/><path d="M66 220.75h-4.5" stroke="#5e5e5e" stroke-width="0.8"/><path d="M66 222.81h-5.5" stroke="#5e5e5e" stroke-width="0.8"/><path d="M66 224.88h-4.5" stroke="#5e5e5e" stroke-width="0.8"/><path d="M66 226.95h-4.5" stroke="#5e5e5e" stroke-width="0.8"/><path d="M66 229.02h-4.5" stroke="#5e5e5e" stroke-width="0.8"/><path d="M66 231.09h-4.5" stroke="#5e5e5e" stroke-width="0.8"/><path d="M66 233.16h-11" stroke="#7e7e7e" stroke-width="0.8"/><path d="M66 235.23h-4.5" stroke="#5e5e5e" stroke-width="0.8"/><path d="M66 237.30h-4.5" stroke="#5e5e5e" stroke-width="0.8"/><path d="M66 239.37h-4.5" stroke="#5e5e5e" stroke-width="0.8"/><path d="M66 241.44h-4.5" stroke="#5e5e5e" stroke-width="0.8"/><path d="M66 243.51h-5.5" stroke="#5e5e5e" stroke-width="0.8"/><path d="M66 245.57h-4.5" stroke="#5e5e5e" stroke-width="0.8"/><path d="M66 247.64h-4.5" stroke="#5e5e5e" stroke-width="0.8"/><path d="M66 249.71h-4.5" stroke="#5e5e5e" stroke-width="0.8"/><path d="M66 251.78h-4.5" stroke="#5e5e5e" stroke-width="0.8"/><path d="M66 253.85h-6.5" stroke="#5e5e5e" stroke-width="0.8"/><path d="M66 255.92h-4.5" stroke="#5e5e5e" stroke-width="0.8"/><path d="M66 257.99h-4.5" stroke="#5e5e5e" stroke-width="0.8"/><path d="M66 260.06h-4.5" stroke="#5e5e5e" stroke-width="0.8"/><path d="M66 262.13h-4.5" stroke="#5e5e5e" stroke-width="0.8"/><path d="M66 264.20h-5.5" stroke="#5e5e5e" stroke-width="0.8"/><path d="M66 266.26h-4.5" stroke="#5e5e5e" stroke-width="0.8"/><path d="M66 268.33h-4.5" stroke="#5e5e5e" stroke-width="0.8"/><path d="M66 270.40h-4.5" stroke="#5e5e5e" stroke-width="0.8"/><path d="M66 272.47h-4.5" stroke="#5e5e5e" stroke-width="0.8"/><path d="M66 274.54h-11" stroke="#7e7e7e" stroke-width="0.8"/><path d="M66 276.61h-4.5" stroke="#5e5e5e" stroke-width="0.8"/><path d="M66 278.68h-4.5" stroke="#5e5e5e" stroke-width="0.8"/><path d="M66 280.75h-4.5" stroke="#5e5e5e" stroke-width="0.8"/><path d="M66 282.82h-4.5" stroke="#5e5e5e" stroke-width="0.8"/><path d="M66 284.89h-5.5" stroke="#5e5e5e" stroke-width="0.8"/><path d="M66 286.95h-4.5" stroke="#5e5e5e" stroke-width="0.8"/><path d="M66 289.02h-4.5" stroke="#5e5e5e" stroke-width="0.8"/><path d="M66 291.09h-4.5" stroke="#5e5e5e" stroke-width="0.8"/><path d="M66 293.16h-4.5" stroke="#5e5e5e" stroke-width="0.8"/><path d="M66 295.23h-6.5" stroke="#5e5e5e" stroke-width="0.8"/><path d="M66 297.30h-4.5" stroke="#5e5e5e" stroke-width="0.8"/><path d="M66 299.37h-4.5" stroke="#5e5e5e" stroke-width="0.8"/><path d="M66 301.44h-4.5" stroke="#5e5e5e" stroke-width="0.8"/><path d="M66 303.51h-4.5" stroke="#5e5e5e" stroke-width="0.8"/><path d="M66 305.58h-5.5" stroke="#5e5e5e" stroke-width="0.8"/><path d="M66 307.64h-4.5" stroke="#5e5e5e" stroke-width="0.8"/><path d="M66 309.71h-4.5" stroke="#5e5e5e" stroke-width="0.8"/><path d="M66 311.78h-4.5" stroke="#5e5e5e" stroke-width="0.8"/><path d="M66 313.85h-4.5" stroke="#5e5e5e" stroke-width="0.8"/><path d="M66 315.92h-11" stroke="#7e7e7e" stroke-width="0.8"/><path d="M66 317.99h-4.5" stroke="#5e5e5e" stroke-width="0.8"/><path d="M66 320.06h-4.5" stroke="#5e5e5e" stroke-width="0.8"/><path d="M66 322.13h-4.5" stroke="#5e5e5e" stroke-width="0.8"/><path d="M66 324.20h-4.5" stroke="#5e5e5e" stroke-width="0.8"/><path d="M66 326.27h-5.5" stroke="#5e5e5e" stroke-width="0.8"/><path d="M66 328.33h-4.5" stroke="#5e5e5e" stroke-width="0.8"/><path d="M66 330.40h-4.5" stroke="#5e5e5e" stroke-width="0.8"/><path d="M66 332.47h-4.5" stroke="#5e5e5e" stroke-width="0.8"/><path d="M66 334.54h-4.5" stroke="#5e5e5e" stroke-width="0.8"/><path d="M66 336.61h-6.5" stroke="#5e5e5e" stroke-width="0.8"/><path d="M66 338.68h-4.5" stroke="#5e5e5e" stroke-width="0.8"/><path d="M66 340.75h-4.5" stroke="#5e5e5e" stroke-width="0.8"/><path d="M66 342.82h-4.5" stroke="#5e5e5e" stroke-width="0.8"/><path d="M66 344.89h-4.5" stroke="#5e5e5e" stroke-width="0.8"/><path d="M66 346.96h-5.5" stroke="#5e5e5e" stroke-width="0.8"/><path d="M66 349.02h-4.5" stroke="#5e5e5e" stroke-width="0.8"/><path d="M66 351.09h-4.5" stroke="#5e5e5e" stroke-width="0.8"/><path d="M66 353.16h-4.5" stroke="#5e5e5e" stroke-width="0.8"/><path d="M66 355.23h-4.5" stroke="#5e5e5e" stroke-width="0.8"/><path d="M66 357.30h-11" stroke="#7e7e7e" stroke-width="0.8"/><path d="M66 359.37h-4.5" stroke="#5e5e5e" stroke-width="0.8"/><path d="M66 361.44h-4.5" stroke="#5e5e5e" stroke-width="0.8"/><path d="M66 363.51h-4.5" stroke="#5e5e5e" stroke-width="0.8"/><path d="M66 365.58h-4.5" stroke="#5e5e5e" stroke-width="0.8"/><path d="M66 367.65h-5.5" stroke="#5e5e5e" stroke-width="0.8"/><path d="M66 369.71h-4.5" stroke="#5e5e5e" stroke-width="0.8"/><path d="M66 371.78h-4.5" stroke="#5e5e5e" stroke-width="0.8"/><path d="M66 373.85h-4.5" stroke="#5e5e5e" stroke-width="0.8"/><path d="M66 375.92h-4.5" stroke="#5e5e5e" stroke-width="0.8"/><path d="M66 377.99h-6.5" stroke="#5e5e5e" stroke-width="0.8"/><path d="M66 380.06h-4.5" stroke="#5e5e5e" stroke-width="0.8"/><path d="M66 382.13h-4.5" stroke="#5e5e5e" stroke-width="0.8"/><path d="M66 384.20h-4.5" stroke="#5e5e5e" stroke-width="0.8"/><path d="M66 386.27h-4.5" stroke="#5e5e5e" stroke-width="0.8"/><path d="M66 388.34h-5.5" stroke="#5e5e5e" stroke-width="0.8"/><path d="M66 390.40h-4.5" stroke="#5e5e5e" stroke-width="0.8"/><path d="M66 392.47h-4.5" stroke="#5e5e5e" stroke-width="0.8"/><path d="M66 394.54h-4.5" stroke="#5e5e5e" stroke-width="0.8"/><path d="M66 396.61h-4.5" stroke="#5e5e5e" stroke-width="0.8"/><path d="M66 398.68h-11" stroke="#7e7e7e" stroke-width="0.8"/><path d="M66 400.75h-4.5" stroke="#5e5e5e" stroke-width="0.8"/><path d="M66 402.82h-4.5" stroke="#5e5e5e" stroke-width="0.8"/><path d="M66 404.89h-4.5" stroke="#5e5e5e" stroke-width="0.8"/><path d="M66 406.96h-4.5" stroke="#5e5e5e" stroke-width="0.8"/><path d="M66 409.03h-5.5" stroke="#5e5e5e" stroke-width="0.8"/><path d="M66 411.09h-4.5" stroke="#5e5e5e" stroke-width="0.8"/><path d="M66 413.16h-4.5" stroke="#5e5e5e" stroke-width="0.8"/><path d="M66 415.23h-4.5" stroke="#5e5e5e" stroke-width="0.8"/><path d="M66 417.30h-4.5" stroke="#5e5e5e" stroke-width="0.8"/><path d="M66 419.37h-6.5" stroke="#5e5e5e" stroke-width="0.8"/><path d="M66 421.44h-4.5" stroke="#5e5e5e" stroke-width="0.8"/><path d="M66 423.51h-4.5" stroke="#5e5e5e" stroke-width="0.8"/><path d="M66 425.58h-4.5" stroke="#5e5e5e" stroke-width="0.8"/><path d="M66 427.65h-4.5" stroke="#5e5e5e" stroke-width="0.8"/><path d="M66 429.72h-5.5" stroke="#5e5e5e" stroke-width="0.8"/></svg>
<div class="rn" style="left:57.5px;top:111.5px;">2</div>
<div class="rn" style="left:57.5px;top:152.9px;">0</div>
<div class="rn" style="left:57.5px;top:194.3px;">2</div>
<div class="rn" style="left:57.5px;top:235.7px;">4</div>
<div class="rn" style="left:57.5px;top:277.0px;">6</div>
<div class="rn" style="left:57.5px;top:318.4px;">8</div>
<div class="rn" style="left:57.5px;top:359.8px;">1</div>
<div class="rn" style="left:57.5px;top:366.8px;">0</div>
<div class="rn" style="left:57.5px;top:401.2px;">1</div>
<div class="rn" style="left:57.5px;top:408.2px;">2</div>
<div class="a " style="left:55px;top:60px;width:12px;height:12px;background:#434343;border-right:1px solid #4e4e4e;border-bottom:1px solid #4e4e4e;"></div>
<svg style="left:56px;top:61px;" width="10" height="10" viewBox="0 0 10 10"><path d="M0 7.5h10M7.5 0v10" stroke="#777" stroke-width="0.8" stroke-dasharray="1 1"/></svg>
<div class="a " style="left:731px;top:72px;width:14px;height:358px;background:linear-gradient(90deg,#2c2c2c,#3e3e3e 35%,#484848);"></div>
<div class="a " style="left:733px;top:60px;width:12px;height:12px;background:#3c3c3c;"></div>
<div class="a " style="left:252px;top:150px;width:294px;height:280px;background:#fff;"></div>
<svg style="left:252px;top:150px;" width="294" height="280" viewBox="252 150 294 280">
 <circle cx="400" cy="291.3" r="79.5" fill="#000"/>
 <circle cx="400" cy="291.3" r="80" fill="none" stroke="#a0a0a0" stroke-width="0.4"/>
 <g fill="#fff" stroke="#222" stroke-width="0.9">
  <rect x="398.4" y="209.9" width="3.2" height="3.2"/>
  <rect x="398.4" y="369.3" width="3.2" height="3.2"/>
  <rect x="318.8" y="289.7" width="3.2" height="3.2"/>
  <rect x="478" y="289.700" width="3.2" height="3.2"/>
 </g>
</svg>
<!-- DOCK -->
<div class="a " style="left:744px;top:45px;width:256px;height:385px;background:#2e2e2e;"></div>
<div class="a " style="left:745px;top:45px;width:255px;height:10px;background:#3a3a3a;border-left:1px solid #2c2c2c;"></div>
<div class="a " style="left:746px;top:55.5px;width:28.5px;height:374.5px;background:#525252;border-left:1px solid #5a5a5a;border-right:1px solid #3a3a3a;"></div>
<div class="a " style="left:747px;top:56px;width:26.5px;height:270px;background:#4c4c4c;"></div>
<div class="a " style="left:750px;top:326px;width:1px;height:104px;background:#585858;"></div>
<div class="a " style="left:769px;top:326px;width:1px;height:104px;background:#585858;"></div>
<svg style="left:765px;top:48.2px;" width="6.5" height="5" viewBox="0 0 6.5 5"><path d="M2.8 0L0.4 2.500L2.8 5zM6.2 0L3.8 2.500L6.2 5z" fill="#c4c4c4"/></svg>
<div class="a " style="left:752.5px;top:57.5px;width:14px;height:2px;background:repeating-linear-gradient(90deg,#353535 0 1px,#4a4a4a 1px 2px);"></div>
<svg style="left:753px;top:64px;" width="15" height="15" viewBox="0 0 15 15"><path d="M1 1.500h5M1 4.500h5M1 7.500h5" stroke="#cecece" stroke-width="1.6" stroke-dasharray="1.5 1"/><rect x="1" y="10" width="5" height="3.5" fill="#c8c8c8"/><path d="M9.5 13V6.500c0-2 3.5-2 3.5 0" fill="none" stroke="#cecece" stroke-width="1.8"/><path d="M10.5 3.500l3.5 3l-4 1.500z" fill="#c8c8c8"/></svg>
<svg style="left:753.5px;top:87.5px;" width="13" height="11" viewBox="0 0 13 11"><path d="M0.8 0.300l11.4 5.200l-11.4 5.200z" fill="#c8c8c8"/></svg>
<div class="a " style="left:747px;top:104px;width:27px;height:2px;background:#3e3e3e;border-bottom:1px solid #5e5e5e;"></div>
<div class="a " style="left:752.5px;top:107.5px;width:14px;height:2px;background:repeating-linear-gradient(90deg,#353535 0 1px,#4a4a4a 1px 2px);"></div>
<svg style="left:753px;top:114px;" width="15" height="17" viewBox="0 0 15 17"><path d="M3.5 8.500h8l-.8 7.500h-6.400z" fill="#c8c8c8"/><path d="M5 8V3.500M7.5 8V1.500M10 8V3.5" stroke="#cecece" stroke-width="1.4"/><path d="M5 1l1.2 3h-2.400zM7.5 0l1.2 2.500h-2.400zM10 1l1.2 3h-2.400z" fill="#c8c8c8"/><path d="M2.5 5l1.5 3M12.5 5L11 8" stroke="#cecece" stroke-width="1.1"/></svg>
<svg style="left:752px;top:136px;" width="17" height="15" viewBox="0 0 17 15"><path d="M1 3.500c3-1.5 5-.5 8 .5l6.5-.5" fill="none" stroke="#cecece" stroke-width="1.8" stroke-linecap="round"/><path d="M1 3.500l4 1.800l-.5-3z" fill="#c8c8c8"/><path d="M2 10.500h8.5" stroke="#cecece" stroke-width="1.5"/><path d="M10 8.500c2-.8 4.5 0 5.5 2c-1 2-3.5 2.8-5.5 2z" fill="#c8c8c8"/></svg>
<div class="a " style="left:747px;top:155px;width:27px;height:2px;background:#3e3e3e;border-bottom:1px solid #5e5e5e;"></div>
<div class="a " style="left:752.5px;top:158.5px;width:14px;height:2px;background:repeating-linear-gradient(90deg,#353535 0 1px,#4a4a4a 1px 2px);"></div>
<svg style="left:753px;top:164px;" width="15" height="16" viewBox="0 0 15 16"><path d="M1 1.500h6M1 4.500h4M1 7.500h4M1 10.500h3" stroke="#cecece" stroke-width="1.4"/><path d="M8.7 3.200a1.7 1.7 0 1 1 2.6 0c-.4 1-.6 2-.5 3.300h2.200c.7 0 1.2.5 1.2 1.200v1.800h-8.400v-1.800c0-.7.5-1.2 1.2-1.200h2.200c.1-1.3-.1-2.3-.5-3.300z" fill="#c8c8c8"/><rect x="4.5" y="11" width="10.5" height="3.5" fill="#c8c8c8"/></svg>
<div class="a " style="left:747px;top:186px;width:27px;height:2px;background:#3e3e3e;border-bottom:1px solid #5e5e5e;"></div>
<div class="a " style="left:752.5px;top:189.5px;width:14px;height:2px;background:repeating-linear-gradient(90deg,#353535 0 1px,#4a4a4a 1px 2px);"></div>
<svg style="left:755px;top:196px;" width="11.5" height="13" viewBox="0 0 13 15"><path d="M6 1h6.500v1.600h-1.300V14H9.600V2.600H8.200V14H6.600V8.200C3.5 8.2 1.5 6.8 1.5 4.600S3.5 1 6 1z" fill="#c8c8c8"/></svg>
<div class="a " style="left:747px;top:216px;width:27px;height:2px;background:#3e3e3e;border-bottom:1px solid #5e5e5e;"></div>
<div class="a " style="left:752.5px;top:219.5px;width:14px;height:2px;background:repeating-linear-gradient(90deg,#353535 0 1px,#4a4a4a 1px 2px);"></div>
<svg style="left:754px;top:225px;" width="13" height="16" viewBox="0 0 13 16"><rect x="0.8" y="0.8" width="11.4" height="14.4" fill="none" stroke="#cecece" stroke-width="1.6"/><rect x="3" y="3" width="7" height="5" fill="#c8c8c8"/><path d="M3 10.500h7M3 12.800h7" stroke="#cecece" stroke-width="1.2"/></svg>
<svg style="left:754px;top:246px;" width="13" height="15" viewBox="0 0 13 15"><path d="M0.8 0.800h11.400v9.500l-4 4h-7.400z" fill="#c8c8c8"/><path d="M3 4h7M3 6.500h7M3 9h4" stroke="#555" stroke-width="1.1"/><path d="M8.2 14.300v-4h4" fill="#8a8a8a"/></svg>
<div class="a " style="left:747px;top:265px;width:27px;height:2px;background:#3e3e3e;border-bottom:1px solid #5e5e5e;"></div>
<div class="a " style="left:752.5px;top:268.5px;width:14px;height:2px;background:repeating-linear-gradient(90deg,#353535 0 1px,#4a4a4a 1px 2px);"></div>
<div class="t " style="left:754.5px;top:276.5px;font-size:13px;color:#dadada;font-family:'Liberation Sans',sans-serif;">A</div>
<div class="a " style="left:764px;top:275.5px;width:1px;height:13.5px;background:#d4d4d4;"></div>
<div class="a " style="left:747px;top:297px;width:27px;height:2px;background:#3e3e3e;border-bottom:1px solid #5e5e5e;"></div>
<div class="a " style="left:752.5px;top:300.5px;width:14px;height:2px;background:repeating-linear-gradient(90deg,#353535 0 1px,#4a4a4a 1px 2px);"></div>
<svg style="left:753px;top:305px;" width="15" height="15" viewBox="0 0 15 15"><path d="M1 3.500l3.5-2l3.5 2v4l-3.5 2l-3.5-2z" fill="#8c8c8c" stroke="#cecece" stroke-width="1"/><path d="M1 3.500l3.5 2l3.5-2M4.5 5.500v4" fill="none" stroke="#cecece" stroke-width="0.9"/><rect x="10" y="1.5" width="4" height="3" fill="#c8c8c8"/><rect x="10" y="6" width="4" height="3" fill="#c8c8c8"/><rect x="1" y="11.5" width="13" height="2.5" fill="#c8c8c8"/><path d="M4 11.500v2.500M7 11.500v2.500M10 11.500v2.5" stroke="#555" stroke-width="0.7"/></svg>
<div class="a " style="left:747px;top:326px;width:27px;height:1px;background:#3a3a3a;"></div>
<div class="a " style="left:776px;top:56px;width:224px;height:374px;background:#454545;"></div>
<svg style="left:990px;top:48.2px;" width="6.5" height="5" viewBox="0 0 6.5 5"><path d="M0.4 0L2.8 2.500L0.4 5zM3.8 0L6.2 2.500L3.8 5z" fill="#c4c4c4"/></svg>
<div class="a " style="left:776px;top:54.5px;width:224px;height:13px;background:#3a3a3a;border-bottom:1px solid #2e2e2e;"></div>
<div class="ptab off" style="left:777px;top:55.5px;width:30px;height:11px;line-height:11.5px;background:#404040;border:1px solid #323232;border-bottom:none;">直方图</div>
<div class="ptab on" style="left:810.5px;top:55.5px;width:27px;height:12px;line-height:11.5px;border:1px solid #636363;border-bottom:none;">信息</div>
<svg style="left:985px;top:58.5px;" width="10" height="6" viewBox="0 0 10 6"><path d="M0 0.500h3.500l-1.750 2.500z" fill="#b4b4b4"/><path d="M4.5 0.500h5.500M4.5 2.500h5.500M4.5 4.500h5.5" stroke="#b4b4b4" stroke-width="1"/></svg>
<div class="a " style="left:776px;top:67.5px;width:224px;height:2px;background:#4c4c4c;"></div>
<div class="a " style="left:776px;top:69.5px;width:224px;height:14px;background:#3a3a3a;border-bottom:1px solid #2e2e2e;"></div>
<div class="ptab on" style="left:777px;top:70.5px;width:26px;height:13px;line-height:12.5px;border:1px solid #636363;border-bottom:none;">调整</div>
<div class="ptab off" style="left:804px;top:70.5px;width:26px;height:12px;line-height:12.5px;background:#404040;border:1px solid #323232;border-bottom:none;">样式</div>
<svg style="left:985px;top:73.5px;" width="10" height="6" viewBox="0 0 10 6"><path d="M0 0.500h3.500l-1.750 2.500z" fill="#b4b4b4"/><path d="M4.5 0.500h5.500M4.5 2.500h5.500M4.5 4.500h5.5" stroke="#b4b4b4" stroke-width="1"/></svg>
<div class="a " style="left:776px;top:83.5px;width:224px;height:2px;background:#4c4c4c;"></div>
<div class="a " style="left:776px;top:85.5px;width:224px;height:13.5px;background:#3a3a3a;border-bottom:1px solid #2e2e2e;"></div>
<div class="ptab on" style="left:777px;top:86.5px;width:26px;height:12.5px;line-height:12.0px;border:1px solid #636363;border-bottom:none;">图层</div>
<div class="ptab off" style="left:804px;top:86.5px;width:26px;height:11.5px;line-height:12.0px;background:#404040;border:1px solid #323232;border-bottom:none;">通道</div>
<svg style="left:985px;top:89.5px;" width="10" height="6" viewBox="0 0 10 6"><path d="M0 0.500h3.500l-1.750 2.500z" fill="#b4b4b4"/><path d="M4.5 0.500h5.500M4.5 2.500h5.500M4.5 4.500h5.5" stroke="#b4b4b4" stroke-width="1"/></svg>
<div class="a " style="left:776px;top:99px;width:224px;height:62px;background:#535353;"></div>
<div class="a dd" style="left:778.5px;top:101px;width:50.5px;height:14px;background:;"></div>
<svg style="left:783px;top:104px;" width="8" height="9" viewBox="0 0 8 9"><circle cx="4.6" cy="3.4" r="2.5" fill="none" stroke="#cecece" stroke-width="1.2"/><path d="M2.8 5.400L0.7 8.3" stroke="#cecece" stroke-width="1.3"/></svg>
<div class="t lbl" style="left:793px;top:103.5px;">类型</div>
<svg style="left:822.5px;top:105px;" width="4" height="6.4" viewBox="0 0 4 6.4"><path d="M0 2.400L2 0L4 2.400zM0 4L2 6.400L4 4z" fill="#e2e2e2"/></svg>
<svg style="left:845.3px;top:104px;" width="10" height="8" viewBox="0 0 10 8"><rect x="0.6" y="0.6" width="8.8" height="6.8" fill="#6a6a6a" stroke="#cecece" stroke-width="1.1"/><path d="M1.4 6.400l2.2-2.600l1.8 1.700l1.3-1.200l1.9 2.100z" fill="#c8c8c8"/><rect x="6" y="1.6" width="2" height="1.6" fill="#c8c8c8"/></svg>
<svg style="left:863.6px;top:104px;" width="8" height="8" viewBox="0 0 8 8"><circle cx="4" cy="4" r="3.3" fill="#3e3e3e" stroke="#cecece" stroke-width="1.2"/><path d="M4 0.700a3.3 3.3 0 0 0 0 6.600z" fill="#c8c8c8"/></svg>
<div class="t " style="left:881px;top:101.5px;font-family:'Liberation Serif',serif;font-size:12px;color:#d6d6d6;">T</div>
<svg style="left:898.8px;top:104px;" width="9" height="8" viewBox="0 0 9 8"><rect x="1.6" y="1.6" width="5.8" height="4.8" fill="none" stroke="#cecece" stroke-width="1.1"/><rect x="0.3" y="0.3" width="2.6" height="2.6" fill="#c8c8c8"/><rect x="6.1" y="0.3" width="2.6" height="2.6" fill="#c8c8c8"/><rect x="0.3" y="5.1" width="2.6" height="2.6" fill="#c8c8c8"/><rect x="6.1" y="5.1" width="2.6" height="2.6" fill="#c8c8c8"/></svg>
<svg style="left:915.5px;top:103.5px;" width="10" height="10" viewBox="0 0 10 10"><path d="M2.8 0.600h4l2.5 2.400v6.300h-6.500z" fill="#7a7a7a" stroke="#cecece" stroke-width="1"/><rect x="0.5" y="4.8" width="4.8" height="4.8" fill="#c8c8c8" stroke="#444" stroke-width="0.6"/></svg>
<div class="a " style="left:941.5px;top:102.5px;width:5.5px;height:12px;background:linear-gradient(#8e8e8e 0 35%,#303030 35%);border:1px solid #2c2c2c;border-radius:1.500px;"></div>
<div class="a dd" style="left:779px;top:121px;width:79.5px;height:14.5px;background:;"></div>
<div class="t lbl" style="left:784px;top:124.5px;">正常</div>
<svg style="left:852px;top:125.5px;" width="4" height="6.4" viewBox="0 0 4 6.4"><path d="M0 2.400L2 0L4 2.400zM0 4L2 6.400L4 4z" fill="#e2e2e2"/></svg>
<div class="t lbl" style="left:864.8px;top:124.5px;letter-spacing:0.100px;">不透明度:</div>
<div class="a inp" style="left:906.5px;top:121px;width:26.5px;height:14.5px;background:;"></div>
<div class="t lbl" style="left:909.5px;top:124.5px;">100%</div>
<div class="a btn" style="left:935.5px;top:121.5px;width:11.5px;height:14px;background:;"></div>
<svg style="left:939px;top:127.5px;" width="4.4" height="2.8" viewBox="0 0 4.4 2.8"><path d="M0 0h4.400L2.2 2.800z" fill="#e6e6e6"/></svg>
<div class="t lbl" style="left:780px;top:144.5px;">锁定:</div>
<svg style="left:806px;top:144px;" width="10" height="10" viewBox="0 0 10 10"><rect x="0.5" y="0.5" width="9" height="9" fill="#7a7a7a" stroke="#8c8c8c" stroke-width="0.8"/><path d="M1 1h2.700v2.700H1zM6.3 1H9v2.700H6.300zM3.7 3.700h2.600v2.600H3.700zM1 6.300h2.700V9H1zM6.3 6.300H9V9H6.300z" fill="#5c5c5c"/></svg>
<svg style="left:821px;top:143px;" width="12" height="12" viewBox="0 0 12 12"><path d="M11 1L5 7.5" stroke="#8c8c8c" stroke-width="1.6" stroke-linecap="round"/><path d="M5.2 6.500l1.5 1.500c-.8 2-3 2.8-5.7 2.400c1.8-.6 2.2-2.8 4.2-3.900z" fill="#8c8c8c"/></svg>
<svg style="left:838px;top:143.5px;" width="11" height="11" viewBox="0 0 11 11"><path d="M5.5 1v9M1 5.500h9" stroke="#cecece" stroke-width="1.2"/><path d="M5.5 0l1.8 2.200h-3.600zM5.5 11l1.8-2.200h-3.600zM0 5.500l2.2-1.800v3.600zM11 5.500l-2.2-1.800v3.600z" fill="#c8c8c8"/></svg>
<svg style="left:855.5px;top:143px;" width="8" height="11" viewBox="0 0 8 11"><rect x="0.5" y="5" width="7" height="5.5" fill="#c8c8c8"/><path d="M2 5V3.300a2 2 0 0 1 4 0V5" fill="none" stroke="#cecece" stroke-width="1.4"/></svg>
<div class="t lbl" style="left:882.5px;top:144.5px;">填充:</div>
<div class="a inp" style="left:906.5px;top:141.5px;width:26.5px;height:14.5px;background:;"></div>
<div class="t lbl" style="left:909.5px;top:144.5px;">100%</div>
<div class="a btn" style="left:935.5px;top:142px;width:11.5px;height:14px;background:;"></div>
<svg style="left:939px;top:148px;" width="4.4" height="2.8" viewBox="0 0 4.4 2.8"><path d="M0 0h4.400L2.2 2.800z" fill="#e6e6e6"/></svg>
<div class="a " style="left:776px;top:160px;width:224px;height:1px;background:#3c3c3c;"></div>
<div class="a " style="left:776px;top:160.5px;width:212px;height:29px;background:#4e4e4e;"></div>
<div class="a " style="left:797px;top:160.5px;width:191px;height:29px;background:#6b7f99;border-top:1px solid #7a8ea8;"></div>
<div class="a " style="left:776px;top:189.5px;width:212px;height:28px;background:#535353;border-top:1px solid #464646;border-bottom:1px solid #3e3e3e;"></div>
<div class="a " style="left:795.5px;top:161px;width:1px;height:56px;background:#3c3c3c;"></div>
<svg style="left:781px;top:171px;" width="11" height="8" viewBox="0 0 11 8"><path d="M0.5 4C2.5 0.8 8.5 0.8 10.5 4C8.5 7.2 2.5 7.2 0.5 4z" fill="#dcdcdc"/><circle cx="5.5" cy="4" r="2.1" fill="#3c3c3c"/><circle cx="5.5" cy="4" r="0.9" fill="#d0d0d0"/></svg>
<svg style="left:781px;top:199px;" width="11" height="8" viewBox="0 0 11 8"><path d="M0.5 4C2.5 0.8 8.5 0.8 10.5 4C8.5 7.2 2.5 7.2 0.5 4z" fill="#dcdcdc"/><circle cx="5.5" cy="4" r="2.1" fill="#3c3c3c"/><circle cx="5.5" cy="4" r="0.9" fill="#d0d0d0"/></svg>
<svg style="left:800px;top:162px;" width="24" height="25" viewBox="0 0 24 25"><defs><pattern id="ck" width="4" height="4" patternUnits="userSpaceOnUse"><rect width="4" height="4" fill="#fff"/><rect width="2" height="2" fill="#ccc"/><rect x="2" y="2" width="2" height="2" fill="#ccc"/></pattern></defs><rect x="0.5" y="0.5" width="23" height="24" fill="url(#ck)" stroke="#222" stroke-width="1"/><rect x="-0.5" y="-0.5" width="25" height="26" fill="none" stroke="#e8e8e8" stroke-width="1"/><circle cx="12.3" cy="11.8" r="6" fill="#000"/><rect x="15" y="16" width="8.8" height="8.8" fill="#66798f" stroke="#e8e8e8" stroke-width="1"/><rect x="17.6" y="18.6" width="3.6" height="3.6" fill="none" stroke="#e8e8e8" stroke-width="0.9"/></svg>
<div class="t lbl" style="left:831px;top:171px;color:#f0f0f0;">椭圆 1</div>
<div class="a " style="left:800.5px;top:192px;width:23px;height:23px;background:#fff;border:1px solid #3a3a3a;"></div>
<div class="t lbl" style="left:832px;top:199.5px;font-style:italic;color:#eaeaea;">背景</div>
<svg style="left:968.5px;top:197.5px;" width="8" height="10" viewBox="0 0 8 10"><rect x="0.6" y="4.6" width="6.8" height="4.8" fill="none" stroke="#cecece" stroke-width="1.2"/><path d="M2 4.500V3a2 2 0 0 1 4 0V4.5" fill="none" stroke="#cecece" stroke-width="1.2"/><rect x="3.4" y="6" width="1.2" height="2" fill="#c8c8c8"/></svg>
<div class="a " style="left:988px;top:160.5px;width:8px;height:269.5px;background:#4b4b4b;border-left:1.500px solid #3a3a3a;"></div>
<div class="a " style="left:996px;top:55px;width:2.2px;height:375px;background:#2f2f2f;"></div>
<div class="a " style="left:998.2px;top:55px;width:1.8px;height:375px;background:#484848;"></div>
</div>
</body>
</html>
